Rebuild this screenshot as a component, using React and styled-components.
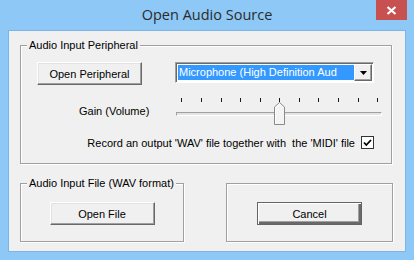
import styled, { createGlobalStyle } from "styled-components"

const Global = createGlobalStyle`
    html, body {
        margin: 0;
        padding: 0;
        background: #8ec8f6;
    }
    * {
        box-sizing: border-box;
    }
`;

const TICKS = Array.from({ length: 11 })

const App = () => {
    const gain = 0.5
    return (
        <>
            <Global />
            <Window>
                <TitleBar>
                    <Title>Open Audio Source</Title>
                    <CloseButton>
                        <svg width="11" height="9" viewBox="0 0 11 9">
                            <path d="M1.5 1 L9.5 8 M9.5 1 L1.5 8" stroke="#fff" strokeWidth="2.2" />
                        </svg>
                    </CloseButton>
                </TitleBar>
                <Client>
                    <Group $w={372} $h={119}>
                        <Legend>Audio Input Peripheral</Legend>
                        <TopRow>
                            <Button $w={105}>Open Peripheral</Button>
                            <Combo>
                                <ComboText>Microphone (High Definition Aud</ComboText>
                                <ComboArrow>
                                    <svg width="7" height="4" viewBox="0 0 7 4">
                                        <path d="M0 0 H7 L3.5 4 Z" fill="#000" />
                                    </svg>
                                </ComboArrow>
                            </Combo>
                        </TopRow>
                        <GainRow>
                            <Label>Gain (Volume)</Label>
                            <Trackbar>
                                <Ticks>
                                    {TICKS.map((_, i) => <Tick key={i} />)}
                                </Ticks>
                                <Track />
                                <Thumb style={{ left: 5 + gain * 196 - 5 }}>
                                    <svg width="11" height="23" viewBox="0 0 11 23">
                                        <path d="M0.5 22.5 V5 L5.5 0.5 L10.5 5 V22.5 Z" fill="#f4f4f4" stroke="#8a8a8a" />
                                        <path d="M1.5 21.5 V5.4 L5.5 1.8" fill="none" stroke="#fff" />
                                    </svg>
                                </Thumb>
                            </Trackbar>
                        </GainRow>
                        <CheckRow>
                            <Label>Record an output 'WAV' file together with&nbsp; the 'MIDI' file</Label>
                            <CheckBox>
                                <svg width="9" height="8" viewBox="0 0 9 8">
                                    <path d="M1 3.5 L3.3 6 L8 1" fill="none" stroke="#000" strokeWidth="1.8" />
                                </svg>
                            </CheckBox>
                        </CheckRow>
                    </Group>
                    <BottomRow>
                        <Group $w={164} $h={59}>
                            <Legend>Audio Input File (WAV format)</Legend>
                            <Center>
                                <Button $w={105}>Open File</Button>
                            </Center>
                        </Group>
                        <Group $w={167} $h={59}>
                            <Center>
                                <Button $w={105} $default>Cancel</Button>
                            </Center>
                        </Group>
                    </BottomRow>
                </Client>
            </Window>
        </>
    )
}

const Window = styled.div`
    width: 414px;
    height: 260px;
    background: #8ec8f6;
    display: flex;
    flex-direction: column;
    font-family: "Liberation Sans", Arial, sans-serif;
    font-size: 11px;
    color: #000;
`;

const TitleBar = styled.div`
    height: 30px;
    display: flex;
    align-items: flex-start;
    padding-left: 38px;
    padding-right: 7px;
`;

const Title = styled.div`
    flex: 1;
    text-align: center;
    font-family: "Open Sans", "Noto Sans", sans-serif;
    font-size: 14.5px;
    color: #2b2b2b;
    line-height: 30px;
`;

const CloseButton = styled.div`
    width: 31px;
    height: 20px;
    background: #c75050;
    display: flex;
    align-items: center;
    justify-content: center;
`;

const Client = styled.div`
    margin: 0 8px 8px;
    flex: 1;
    background: #f0f0f0;
    border: 1px solid #7cb4e4;
    padding: 14px 0 0 11px;
    display: flex;
    flex-direction: column;
    gap: 19px;
`;

const Group = styled.div`
    position: relative;
    width: ${p => p.$w}px;
    height: ${p => p.$h}px;
    border: 1px solid #a0a0a0;
    box-shadow: inset 1px 1px 0 #fff, 1px 1px 0 #fff;
    display: flex;
    flex-direction: column;
`;

const Legend = styled.span`
    position: absolute;
    top: -8px;
    left: 6px;
    padding: 0 2px;
    background: #f0f0f0;
    line-height: 14px;
    white-space: nowrap;
`;

const TopRow = styled.div`
    display: flex;
    align-items: flex-start;
    gap: 33px;
    margin-top: 16px;
    padding-left: 16px;
`;

const Button = styled.div`
    width: ${p => p.$w}px;
    height: 23px;
    background: #f0f0f0;
    display: flex;
    align-items: center;
    justify-content: center;
    white-space: nowrap;
    border: 1px solid;
    border-color: ${p => p.$default ? "#646464" : "#fff #696969 #696969 #fff"};
    box-shadow: ${p => p.$default
        ? "inset 1px 1px 0 #fff, inset -2px -2px 0 #696969, inset -3px -3px 0 #a0a0a0"
        : "inset -1px -1px 0 #a0a0a0, inset 1px 1px 0 #e3e3e3"};
`;

const Combo = styled.div`
    width: 199px;
    height: 21px;
    display: flex;
    align-items: stretch;
    background: #fff;
    border: 1px solid;
    border-color: #a0a0a0 #fff #fff #a0a0a0;
    box-shadow: inset 1px 1px 0 #696969;
    padding: 2px 1px 2px 2px;
`;

const ComboText = styled.div`
    flex: 1;
    background: #3399ff;
    color: #fff;
    padding-left: 1px;
    line-height: 15px;
    white-space: nowrap;
    overflow: hidden;
`;

const ComboArrow = styled.div`
    width: 18px;
    margin-top: -1px;
    margin-bottom: -1px;
    background: #f0f0f0;
    display: flex;
    align-items: center;
    justify-content: center;
    border: 1px solid;
    border-color: #fff #696969 #696969 #fff;
    box-shadow: inset -1px -1px 0 #a0a0a0;
`;

const GainRow = styled.div`
    display: flex;
    align-items: center;
    gap: 27px;
    margin-top: 11px;
    padding-left: 58px;
`;

const Label = styled.span`
    white-space: nowrap;
    color: #000;
`;

const Trackbar = styled.div`
    position: relative;
    width: 206px;
    height: 30px;
    display: flex;
    flex-direction: column;
`;

const Ticks = styled.div`
    display: flex;
    justify-content: space-between;
    padding: 0 4px 0 5px;
    margin-top: 2px;
`;

const Tick = styled.div`
    width: 1px;
    height: 4px;
    background: #1a1a1a;
`;

const Track = styled.div`
    margin-top: 10px;
    height: 4px;
    border-top: 1px solid #a0a0a0;
    border-left: 1px solid #a0a0a0;
    border-bottom: 1px solid #fff;
    border-right: 1px solid #fff;
    background: #e3e3e3;
`;

const Thumb = styled.div`
    position: absolute;
    top: 6px;
    width: 11px;
    height: 23px;
    display: flex;
`;

const CheckRow = styled.div`
    display: flex;
    align-items: center;
    justify-content: flex-end;
    gap: 6px;
    margin-top: 10px;
    padding-right: 17px;
`;

const CheckBox = styled.div`
    width: 13px;
    height: 13px;
    background: #fff;
    border: 1px solid #333;
    display: flex;
    align-items: center;
    justify-content: center;
`;

const BottomRow = styled.div`
    display: flex;
    gap: 42px;
`;

const Center = styled.div`
    flex: 1;
    display: flex;
    justify-content: center;
    align-items: flex-start;
    padding-top: 18px;
`;

export default App;
